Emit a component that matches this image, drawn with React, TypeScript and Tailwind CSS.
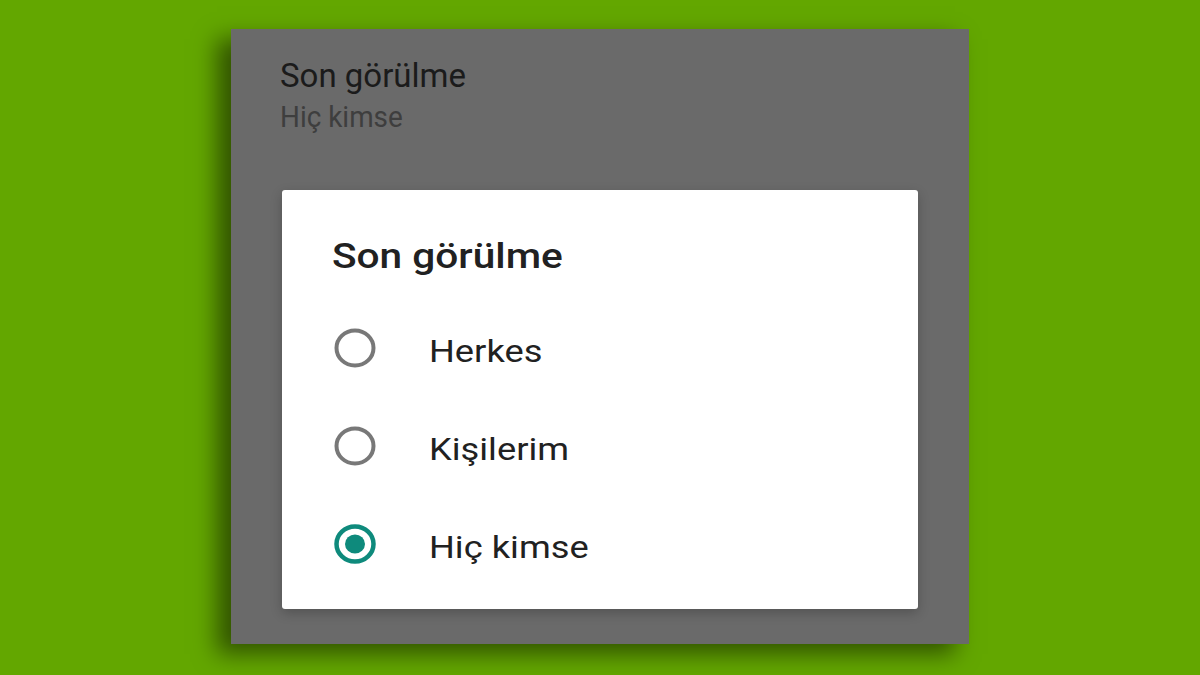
const options = [
  { label: 'Herkes', checked: false },
  { label: 'Kişilerim', checked: false },
  { label: 'Hiç kimse', checked: true },
]

const Radio = ({ checked }: { checked: boolean }) => (
  <svg width="42" height="40" viewBox="0 0 42 40" className="ml-[2px] shrink-0">
    <ellipse
      cx="21"
      cy="20"
      rx="18.5"
      ry="17.5"
      fill="none"
      stroke={checked ? '#0e8a7c' : '#787878'}
      strokeWidth={checked ? 4.5 : 4}
    />
    {checked && <ellipse cx="21" cy="20" rx="10" ry="9.5" fill="#0e8a7c" />}
  </svg>
)

const App = () => {
  return (
    <div className="flex h-[675px] w-[1200px] justify-center overflow-hidden bg-[#63a700] pt-[29px] font-['Roboto',sans-serif]">
      <div className="flex h-[615px] w-[738px] flex-col bg-[#6a6a6a] shadow-[-14px_10px_22px_rgba(0,0,0,0.5)]">
        <div className="pl-[49px] pt-[28px]">
          <p className="text-[33px] leading-[38px] text-[#1b1b1b]">Son görülme</p>
          <p className="mt-[4px] origin-left scale-x-[0.93] text-[30px] leading-[36px] text-[#3e3e3e]">
            Hiç kimse
          </p>
        </div>
        <div className="ml-[51px] mt-[55px] h-[419px] w-[636px] rounded-[3px] bg-white pl-[50px] pt-[46px] shadow-[0_4px_12px_rgba(0,0,0,0.22)]">
          <h2 className="origin-left scale-x-[1.16] text-[35px] font-medium leading-[42px] text-[#212121]">
            Son görülme
          </h2>
          <div className="mt-[21px] flex flex-col">
            {options.map((option) => (
              <div key={option.label} className="flex h-[98px] items-center gap-[53px]">
                <Radio checked={option.checked} />
                <span className="origin-left scale-x-[1.17] pt-[7px] text-[31px] leading-[38px] text-[#212121]">
                  {option.label}
                </span>
              </div>
            ))}
          </div>
        </div>
      </div>
    </div>
  )
}

export default App
